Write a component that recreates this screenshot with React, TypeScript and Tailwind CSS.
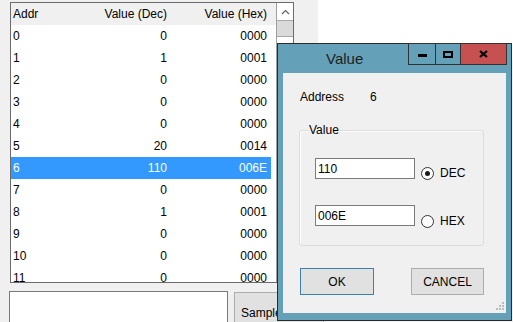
import React from "react";

const rows: [number, number][] = [
  [0, 0], [1, 1], [2, 0], [3, 0], [4, 0], [5, 20],
  [6, 110], [7, 0], [8, 1], [9, 0], [10, 0], [11, 0],
];

const hex = (n: number) => n.toString(16).toUpperCase().padStart(4, "0");

function Radio({ checked }: { checked?: boolean }) {
  return (
    <span className="flex h-[13px] w-[13px] items-center justify-center rounded-full border border-[#333333] bg-white">
      {checked && <span className="h-[5px] w-[5px] rounded-full bg-[#1a1a1a]" />}
    </span>
  );
}

function MemoryList() {
  return (
    <div className="ml-[10px] mt-[2px] flex h-[281px] w-[284px] border border-[#6b6b6b] bg-white">
      <div className="flex w-[265px] flex-col">
        {/* header */}
        <div className="flex h-[22px] shrink-0 items-center bg-[#f0f0f0]">
          <span className="w-[60px] pl-[2px]">Addr</span>
          <span className="w-[100px] pr-[4px] text-right">Value (Dec)</span>
          <span className="w-[100px] pr-[4px] text-right">Value (Hex)</span>
        </div>
        <div className="flex-1 overflow-hidden">
          {rows.map(([addr, val]) => {
            const sel = addr === 6;
            return (
              <div
                key={addr}
                className={`flex h-[22px] w-[260px] items-center ${sel ? "bg-[#3399ff] text-white" : ""}`}
              >
                <span className="w-[60px] pl-[2px]">{addr}</span>
                <span className="w-[100px] pr-[4px] text-right">{val}</span>
                <span className="w-[100px] pr-[4px] text-right">{hex(val)}</span>
              </div>
            );
          })}
        </div>
      </div>
      {/* scrollbar */}
      <div className="flex w-[17px] flex-col border-l border-[#a0a0a0] bg-white">
        <div className="flex h-[17px] items-center justify-center">
          <svg width="9" height="6" viewBox="0 0 9 6">
            <path d="M1 5 L4.5 1.5 L8 5" fill="none" stroke="#606060" strokeWidth="1.2" />
          </svg>
        </div>
        <div className="h-[17px] border-y border-[#a8a8a8] bg-[#dadada]" />
      </div>
    </div>
  );
}

function ValueDialog() {
  return (
    <div className="absolute left-[277px] top-[43px] flex h-[278px] w-[235px] flex-col border border-[#2b2b2b] bg-[#64a1b9]">
      {/* title bar */}
      <div className="flex h-[29px] shrink-0">
        <span className="flex items-center pl-[48px] text-[15px] text-[#1e1e1e]">Value</span>
        <div className="-mt-[1px] ml-auto mr-[4px] flex h-[22px] border border-[#333333]">
          <div className="flex w-[27px] items-center justify-center border-r border-[#333333]">
            <span className="mt-[3px] h-[3px] w-[9px] bg-black" />
          </div>
          <div className="flex w-[25px] items-center justify-center border-r border-[#333333]">
            <span className="h-[7px] w-[10px] border-2 border-black" />
          </div>
          <div className="flex w-[45px] items-center justify-center bg-[#c75050]">
            <svg width="9" height="8" viewBox="0 0 9 8">
              <path d="M1 1 L8 7 M8 1 L1 7" stroke="#000" strokeWidth="2.2" />
            </svg>
          </div>
        </div>
      </div>

      {/* client area */}
      <div className="relative mx-[5px] mb-[7px] flex flex-1 flex-col bg-[#f0f0f0]">
        <div className="ml-[17px] mt-[17px] flex h-[14px] items-center">
          <span className="w-[70px]">Address</span>
          <span>6</span>
        </div>

        <div className="relative ml-[16px] mt-[26px] h-[116px] w-[185px] rounded-[3px] border border-[#dcdcdc] shadow-[inset_1px_1px_0_#ffffff]">
          <span className="absolute -top-[8px] left-[8px] bg-[#f0f0f0] px-[1px]">Value</span>
          <div className="ml-[15px] mt-[27px] flex items-start">
            <div className="flex h-[21px] w-[100px] items-center border border-[#7a7a7a] bg-white pl-[2px]">110</div>
            <div className="ml-[6px] mt-[8px] flex h-[14px] items-center">
              <Radio checked />
              <span className="ml-[6px]">DEC</span>
            </div>
          </div>
          <div className="ml-[15px] mt-[25px] flex items-start">
            <div className="flex h-[21px] w-[100px] items-center border border-[#7a7a7a] bg-white pl-[2px]">006E</div>
            <div className="ml-[6px] mt-[9px] flex h-[14px] items-center">
              <Radio />
              <span className="ml-[6px]">HEX</span>
            </div>
          </div>
        </div>

        <div className="ml-[17px] mt-[22px] flex">
          <button className="flex h-[27px] w-[74px] items-center justify-center border border-[#3c7fb1] bg-[#e1e1e1]">
            OK
          </button>
          <button className="ml-[37px] flex h-[27px] w-[73px] items-center justify-center border border-[#adadad] bg-[#e1e1e1]">
            CANCEL
          </button>
        </div>

        <svg className="absolute bottom-[3px] right-[2px]" width="8" height="8" viewBox="0 0 8 8">
          <rect x="6" y="0" width="2" height="2" fill="#bcbcbc" />
          <rect x="3" y="3" width="2" height="2" fill="#bcbcbc" />
          <rect x="6" y="3" width="2" height="2" fill="#bcbcbc" />
          <rect x="0" y="6" width="2" height="2" fill="#bcbcbc" />
          <rect x="3" y="6" width="2" height="2" fill="#bcbcbc" />
          <rect x="6" y="6" width="2" height="2" fill="#bcbcbc" />
        </svg>
      </div>
    </div>
  );
}

export default function App() {
  return (
    <div className="relative h-[322px] w-[513px] overflow-hidden bg-[#f0f0f0] font-['Liberation_Sans',Arial,sans-serif] text-[12px] leading-[14px] text-black">
      <div className="flex items-start">
        <MemoryList />
        <div className="ml-[24px] h-[60px] flex-1 bg-white" />
      </div>

      <div className="mt-[8px] flex items-start">
        <div className="ml-[9px] h-[40px] w-[219px] border border-[#7a7a7a] bg-white" />
        <button className="ml-[6px] mt-[1px] flex h-[42px] w-[90px] items-center border border-[#adadad] bg-[#e1e1e1] pl-[6px]">
          Sample
        </button>
      </div>

      <ValueDialog />
    </div>
  );
}
